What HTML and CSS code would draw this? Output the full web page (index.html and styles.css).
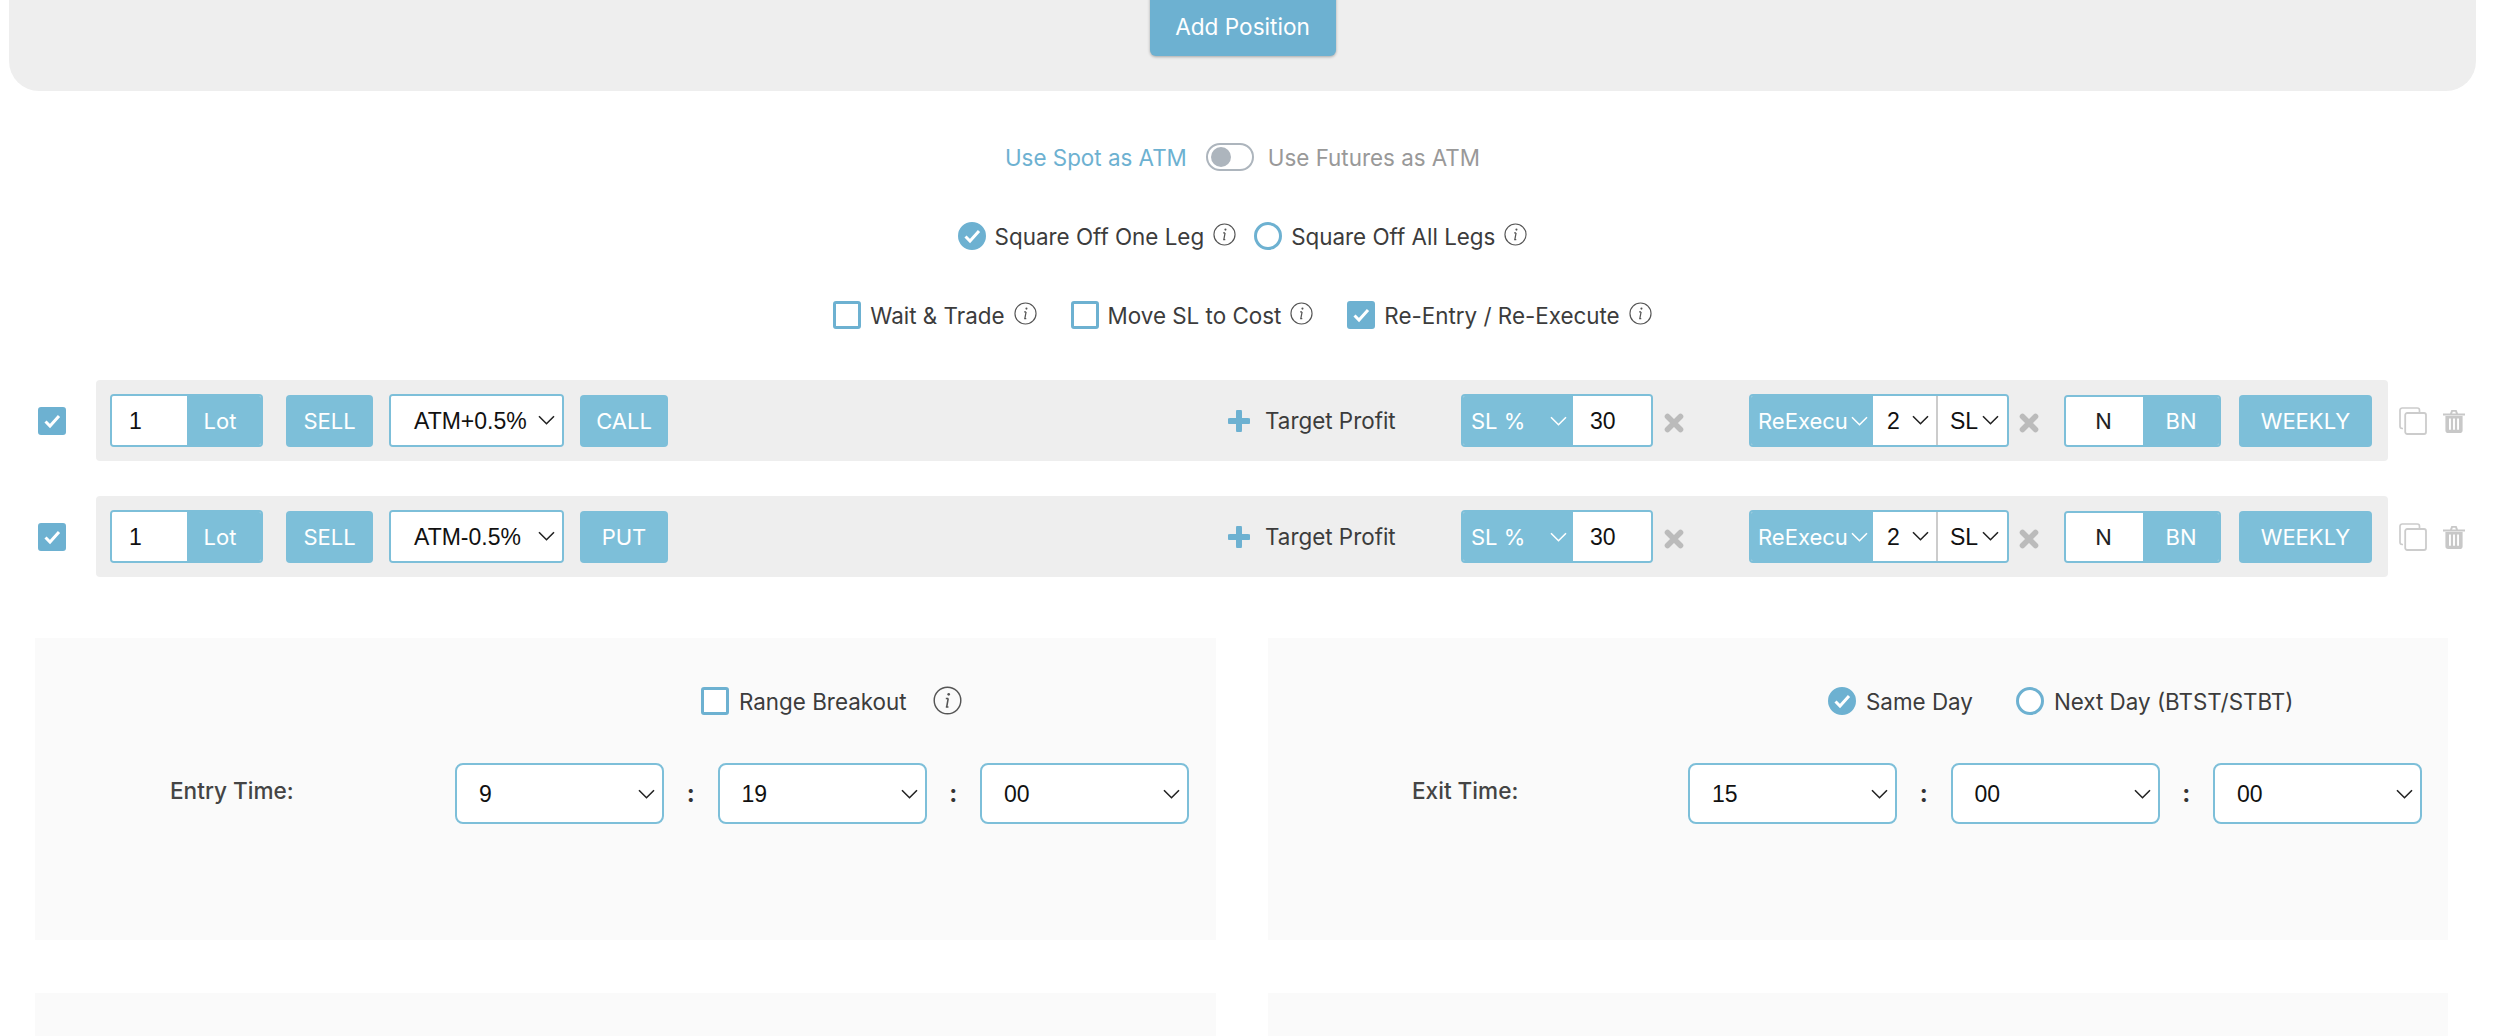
FILE: index.html
```html
<!DOCTYPE html>
<html lang="en">
<head>
<meta charset="utf-8">
<title>Strategy Builder</title>
<link rel="stylesheet" href="styles.css">
</head>
<body>
<svg class="sprite" aria-hidden="true">
  <symbol id="chev" viewBox="0 0 17 10"><path d="M1 1.2l7.5 7.5L16 1.2" fill="none" stroke="currentColor" stroke-width="1.6"/></symbol>
  <symbol id="info" viewBox="0 0 24 24"><circle cx="12" cy="12" r="11" fill="none" stroke="currentColor" stroke-width="1.2"/><path d="M12.6 10.2l-1.3 7.2M10.6 17.4h2.2M10.6 10.3h2" fill="none" stroke="currentColor" stroke-width="1.3"/><circle cx="13" cy="6.9" r="1.1" fill="currentColor"/></symbol>
  <symbol id="tick" viewBox="0 0 28 28"><path d="M7.5 14.5l4.5 4.5 9-10" fill="none" stroke="#fff" stroke-width="3"/></symbol>
  <symbol id="plus" viewBox="0 0 22 22"><path d="M11 2v18M2 11h18" fill="none" stroke="currentColor" stroke-width="6" stroke-linecap="round"/></symbol>
  <symbol id="cross" viewBox="0 0 20 20"><path d="M3.5 3.5l13 13M16.5 3.5l-13 13" fill="none" stroke="currentColor" stroke-width="5.6" stroke-linecap="round"/></symbol>
  <symbol id="copy" viewBox="0 0 28 28"><path d="M4 21.5H3.2A2.2 2.2 0 0 1 1 19.3V3.2A2.2 2.2 0 0 1 3.2 1h15.1a2.2 2.2 0 0 1 2.2 2.2V5" fill="none" stroke="currentColor" stroke-width="1.7"/><rect x="6.2" y="6" width="20.8" height="21" rx="2" fill="none" stroke="currentColor" stroke-width="1.8"/></symbol>
  <symbol id="trash" viewBox="0 0 22 24"><path d="M0 4.4h22v2H0zM7 4.4L8.4 1h5.2L15 4.4h-2.1l-.7-1.6H9.8l-.7 1.6z" fill="currentColor"/><path fill-rule="evenodd" d="M2.4 7h17.2v14.2A2.8 2.8 0 0 1 16.8 24H5.2a2.8 2.8 0 0 1-2.8-2.8zM6 9.6v11.2h1.9V9.6zm4.05 0v11.2h1.9V9.6zm4.05 0v11.2H16V9.6z" fill="currentColor"/></symbol>
</svg>

<main class="main">
  <section class="top-panel">
    <button class="add-btn">Add Position</button>
  </section>

  <div class="opt-row opt-toggle">
    <span class="link">Use Spot as ATM</span>
    <span class="toggle"><span class="knob"></span></span>
    <span class="muted">Use Futures as ATM</span>
  </div>

  <div class="opt-row opt-radio">
    <span class="radio on"><svg class="fill"><use href="#tick"/></svg></span>
    <span class="lbl lbl-a">Square Off One Leg</span>
    <svg class="info"><use href="#info"/></svg>
    <span class="radio radio-b"></span>
    <span class="lbl lbl-a">Square Off All Legs</span>
    <svg class="info"><use href="#info"/></svg>
  </div>

  <div class="opt-row opt-check">
    <span class="box"></span>
    <span class="lbl lbl-a">Wait &amp; Trade</span>
    <svg class="info"><use href="#info"/></svg>
    <span class="box box-b"></span>
    <span class="lbl lbl-a">Move SL to Cost</span>
    <svg class="info"><use href="#info"/></svg>
    <span class="box on box-b"><svg class="fill"><use href="#tick"/></svg></span>
    <span class="lbl lbl-a">Re-Entry / Re-Execute</span>
    <svg class="info"><use href="#info"/></svg>
  </div>

  <div class="leg leg-first">
    <span class="box on leg-check"><svg class="fill"><use href="#tick"/></svg></span>
    <div class="bar">
      <div class="group g-lot"><span class="cell white c-lot">1</span><span class="cell blue grow center c-unit">Lot</span></div>
      <span class="btn b-sell">SELL</span>
      <div class="group g-atm"><span class="cell white grow spread c-atm">ATM+0.5%<svg class="chev"><use href="#chev"/></svg></span></div>
      <span class="btn b-opt">CALL</span>
      <div class="target"><svg class="plus"><use href="#plus"/></svg><span class="lbl">Target Profit</span></div>
      <div class="group g-sl"><span class="cell blue spread c-sl">SL %<svg class="chev"><use href="#chev"/></svg></span><span class="cell white grow c-30">30</span></div>
      <svg class="cross cross-a"><use href="#cross"/></svg>
      <div class="group g-re"><span class="cell blue spread c-re">ReExecu<svg class="chev"><use href="#chev"/></svg></span><span class="cell white spread c-2">2<svg class="chev"><use href="#chev"/></svg></span><span class="cell white grow spread c-slb">SL<svg class="chev"><use href="#chev"/></svg></span></div>
      <svg class="cross cross-b"><use href="#cross"/></svg>
      <div class="group g-n"><span class="cell white c-n center">N</span><span class="cell blue grow center">BN</span></div>
      <span class="btn b-week">WEEKLY</span>
    </div>
    <svg class="copy"><use href="#copy"/></svg>
    <svg class="trash"><use href="#trash"/></svg>
  </div>

  <div class="leg leg-second">
    <span class="box on leg-check"><svg class="fill"><use href="#tick"/></svg></span>
    <div class="bar">
      <div class="group g-lot"><span class="cell white c-lot">1</span><span class="cell blue grow center c-unit">Lot</span></div>
      <span class="btn b-sell">SELL</span>
      <div class="group g-atm"><span class="cell white grow spread c-atm">ATM-0.5%<svg class="chev"><use href="#chev"/></svg></span></div>
      <span class="btn b-opt">PUT</span>
      <div class="target"><svg class="plus"><use href="#plus"/></svg><span class="lbl">Target Profit</span></div>
      <div class="group g-sl"><span class="cell blue spread c-sl">SL %<svg class="chev"><use href="#chev"/></svg></span><span class="cell white grow c-30">30</span></div>
      <svg class="cross cross-a"><use href="#cross"/></svg>
      <div class="group g-re"><span class="cell blue spread c-re">ReExecu<svg class="chev"><use href="#chev"/></svg></span><span class="cell white spread c-2">2<svg class="chev"><use href="#chev"/></svg></span><span class="cell white grow spread c-slb">SL<svg class="chev"><use href="#chev"/></svg></span></div>
      <svg class="cross cross-b"><use href="#cross"/></svg>
      <div class="group g-n"><span class="cell white c-n center">N</span><span class="cell blue grow center">BN</span></div>
      <span class="btn b-week">WEEKLY</span>
    </div>
    <svg class="copy"><use href="#copy"/></svg>
    <svg class="trash"><use href="#trash"/></svg>
  </div>

  <div class="panels">
    <section class="panel panel-entry">
      <div class="panel-opts">
        <span class="box"></span>
        <span class="lbl lbl-rb">Range Breakout</span>
        <svg class="info info-lg"><use href="#info"/></svg>
      </div>
      <div class="time-row">
        <span class="lbl time-label">Entry Time:</span>
        <span class="time-sel">9<svg class="chev"><use href="#chev"/></svg></span>
        <span class="colon">:</span>
        <span class="time-sel">19<svg class="chev"><use href="#chev"/></svg></span>
        <span class="colon">:</span>
        <span class="time-sel">00<svg class="chev"><use href="#chev"/></svg></span>
      </div>
    </section>
    <section class="panel panel-exit">
      <div class="panel-opts">
        <span class="radio on"><svg class="fill"><use href="#tick"/></svg></span>
        <span class="lbl lbl-rb">Same Day</span>
        <span class="radio radio-c"></span>
        <span class="lbl lbl-rb">Next Day (BTST/STBT)</span>
      </div>
      <div class="time-row">
        <span class="lbl time-label">Exit Time:</span>
        <span class="time-sel">15<svg class="chev"><use href="#chev"/></svg></span>
        <span class="colon">:</span>
        <span class="time-sel">00<svg class="chev"><use href="#chev"/></svg></span>
        <span class="colon">:</span>
        <span class="time-sel">00<svg class="chev"><use href="#chev"/></svg></span>
      </div>
    </section>
    <section class="panel panel-next"></section>
    <section class="panel panel-next"></section>
  </div>
</main>
</body>
</html>
```
FILE: styles.css
```css
* { box-sizing: border-box; }
html, body { margin: 0; padding: 0; background: #fff; overflow: hidden; height: 1036px; }
body { font-family: Inter, Roboto, "Liberation Sans", sans-serif; font-size: 22.4px; color: #3c3c3c; }
svg { display: block; flex: none; }
.sprite { width: 0; height: 0; position: absolute; }
.main { width: 2485px; }

.top-panel {
  margin: 0 9px; height: 91px; background: #eee;
  border-radius: 0 0 30px 30px; display: flex; justify-content: center; align-items: flex-start;
}
.add-btn {
  width: 186px; height: 66px; margin-top: -10px; padding: 6px 0 0;
  background: #6db1d1; color: #fff; border: 0; border-radius: 6px;
  font: 400 22.6px Inter, sans-serif; box-shadow: 0 1px 3px rgba(0,0,0,.3);
}

.opt-row { display: flex; justify-content: center; align-items: center; height: 28px; }
.opt-toggle { margin-top: 52px; }
.opt-radio { margin-top: 51px; }
.opt-check { margin-top: 51px; }
.link { color: #6db1d1; }
.muted { color: #999; }
.toggle {
  width: 48px; height: 28px; margin: 0 14px 0 19px; padding: 3px;
  border: 2px solid #adb5bd; border-radius: 14px; background: #fff; display: flex; align-items: center;
}
.knob { width: 20px; height: 20px; border-radius: 50%; background: #adb5bd; }

.radio, .box { width: 28px; height: 28px; border: 3px solid #6db1d1; background: #fff; flex: none; position: relative; }
.radio { border-radius: 50%; }
.box { border-radius: 3px; }
.on { background: #6db1d1; }
.fill { position: absolute; left: -3px; top: -3px; width: 28px; height: 28px; }
.lbl { color: #3c3c3c; white-space: nowrap; }
.lbl-a { margin-left: 9px; }
.info { width: 23px; height: 23px; color: #555; margin-left: 9px; margin-top: -3px; }
.radio-b { margin-left: 18px; }
.box-b { margin-left: 34px; }

.leg { display: flex; align-items: center; padding-left: 38px; }
.leg-first { margin-top: 51px; }
.leg-second { margin-top: 35px; }
.leg-check { margin-right: 30px; }
.bar {
  width: 2292px; height: 81px; background: #eee; border-radius: 4px;
  display: flex; align-items: center; padding-left: 14px;
}
.group {
  display: flex; height: 53px; border: 2px solid #7dbfd9; border-radius: 4px; overflow: hidden;
  font-family: "Liberation Sans", Arial, sans-serif; font-size: 23px; flex: none;
}
.cell { display: flex; align-items: center; height: 100%; white-space: nowrap; overflow: hidden; }
.white { background: #fff; color: #111; padding-top: 2px; }
.white .chev { margin-top: -3px; }
.blue { background: #7dbfd9; color: #fff; font-family: Inter, sans-serif; font-size: 22px; }
.grow { flex: 1; }
.center { justify-content: center; }
.spread { justify-content: space-between; }
.chev { width: 17px; height: 10px; flex: none; color: #222; }
.blue .chev { color: #fff; }
.btn {
  height: 52px; background: #7dbfd9; color: #fff; border-radius: 4px; flex: none; font-size: 22px;
  display: flex; align-items: center; justify-content: center;
}

.g-lot { width: 153px; }
.c-lot { width: 75px; padding-left: 17px; }
.c-unit { padding-right: 8px; }
.b-sell { width: 87px; margin-left: 23px; }
.g-atm { width: 175px; margin-left: 16px; }
.c-atm { padding-left: 23px; padding-right: 7px; }
.b-opt { width: 88px; margin-left: 16px; }
.target { width: 233px; margin-left: 560px; display: flex; align-items: center; gap: 15px; }
.plus { width: 22px; height: 22px; color: #6db1d1; }
.g-sl { width: 192px; }
.c-sl { width: 110px; padding: 0 6px 0 8px; }
.c-30 { padding-left: 17px; }
.cross { width: 20px; height: 20px; color: #bbb; margin-top: 4px; }
.cross-a { margin-left: 11px; }
.g-re { width: 260px; margin-left: 65px; }
.c-re { width: 122px; padding: 0 5px 0 7px; }
.c-2 { width: 65px; padding-left: 14px; padding-right: 7px; border-right: 2px solid #ccc; }
.c-slb { padding-left: 12px; padding-right: 8px; }
.cross-b { margin-left: 10px; }
.g-n { width: 157px; margin-left: 25px; height: 52px; }
.c-n { width: 77px; padding-right: 2px; padding-top: 0; font-family: Inter, sans-serif; font-size: 22px; color: #222; }
.b-week { width: 133px; margin-left: 18px; }
.copy { width: 28px; height: 28px; margin-left: 11px; color: #ccc; }
.trash { width: 22px; height: 24px; margin-left: 16px; color: #c8c8c8; }

.panels {
  display: grid; grid-template-columns: 1181px 1180px; column-gap: 52px; row-gap: 53px;
  padding-left: 35px; margin-top: 61px;
}
.panel { background: #fafafa; height: 302px; }
.panel-next { height: 60px; }
.panel-opts { display: flex; align-items: center; height: 28px; margin-top: 49px; }
.panel-entry .panel-opts { padding-left: 666px; }
.panel-exit .panel-opts { padding-left: 560px; }
.lbl-rb { margin-left: 10px; }
.info-lg { width: 29px; height: 29px; margin-left: 26px; margin-top: -2px; }
.radio-c { margin-left: 43px; }
.time-row { display: flex; align-items: center; margin-top: 48px; }
.panel-entry .time-row { padding-left: 135px; }
.panel-exit .time-row { padding-left: 144px; }
.time-label { margin-top: -7px; font-weight: 500; font-size: 22.6px; color: #444; }
.panel-entry .time-label { width: 285px; }
.panel-exit .time-label { width: 276px; }
.time-sel {
  width: 209px; height: 61px; background: #fff; border: 2px solid #7dbfd9; border-radius: 8px;
  font-family: "Liberation Sans", Arial, sans-serif; font-size: 23px; color: #111;
  display: flex; align-items: center; justify-content: space-between; padding: 2px 7px 0 22px;
}
.time-sel .chev { margin-top: -2px; }
.colon { width: 53.5px; text-align: center; font-weight: 700; font-size: 24px; color: #333; margin-top: -1px; }
```
